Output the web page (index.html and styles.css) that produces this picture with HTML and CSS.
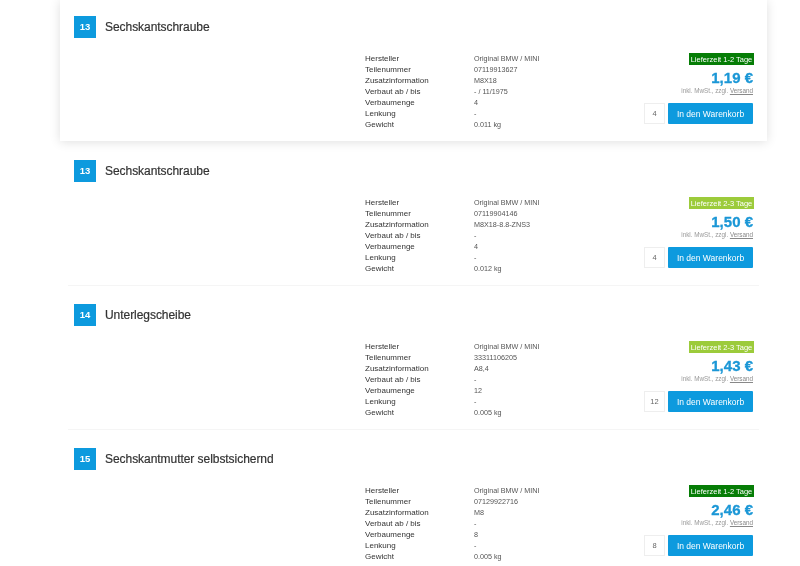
FILE: index.html
```html
<!DOCTYPE html>
<html lang="de">
<head>
<meta charset="utf-8">
<title>Teileliste</title>
<link rel="stylesheet" href="styles.css">
</head>
<body>
<main class="list">
  <article class="item item-active">
    <header class="head"><span class="num">13</span><h2 class="name">Sechskantschraube</h2></header>
    <div class="body">
      <dl class="specs">
        <dt>Hersteller</dt><dd>Original BMW / MINI</dd>
        <dt>Teilenummer</dt><dd>07119913627</dd>
        <dt>Zusatzinformation</dt><dd>M8X18</dd>
        <dt>Verbaut ab / bis</dt><dd>- / 11/1975</dd>
        <dt>Verbaumenge</dt><dd>4</dd>
        <dt>Lenkung</dt><dd>-</dd>
        <dt>Gewicht</dt><dd>0.011 kg</dd>
      </dl>
      <div class="buy">
        <span class="pill pill-fast">Lieferzeit 1-2 Tage</span>
        <div class="price">1,19 €</div>
        <div class="tax">inkl. MwSt., zzgl. <a href="#">Versand</a></div>
        <div class="cart"><span class="qty">4</span><button class="btn">In den Warenkorb</button></div>
      </div>
    </div>
  </article>
  <article class="item">
    <header class="head"><span class="num">13</span><h2 class="name">Sechskantschraube</h2></header>
    <div class="body">
      <dl class="specs">
        <dt>Hersteller</dt><dd>Original BMW / MINI</dd>
        <dt>Teilenummer</dt><dd>07119904146</dd>
        <dt>Zusatzinformation</dt><dd>M8X18-8.8-ZNS3</dd>
        <dt>Verbaut ab / bis</dt><dd>-</dd>
        <dt>Verbaumenge</dt><dd>4</dd>
        <dt>Lenkung</dt><dd>-</dd>
        <dt>Gewicht</dt><dd>0.012 kg</dd>
      </dl>
      <div class="buy">
        <span class="pill pill-slow">Lieferzeit 2-3 Tage</span>
        <div class="price">1,50 €</div>
        <div class="tax">inkl. MwSt., zzgl. <a href="#">Versand</a></div>
        <div class="cart"><span class="qty">4</span><button class="btn">In den Warenkorb</button></div>
      </div>
    </div>
  </article>
  <article class="item">
    <header class="head"><span class="num">14</span><h2 class="name">Unterlegscheibe</h2></header>
    <div class="body">
      <dl class="specs">
        <dt>Hersteller</dt><dd>Original BMW / MINI</dd>
        <dt>Teilenummer</dt><dd>33311106205</dd>
        <dt>Zusatzinformation</dt><dd>A8,4</dd>
        <dt>Verbaut ab / bis</dt><dd>-</dd>
        <dt>Verbaumenge</dt><dd>12</dd>
        <dt>Lenkung</dt><dd>-</dd>
        <dt>Gewicht</dt><dd>0.005 kg</dd>
      </dl>
      <div class="buy">
        <span class="pill pill-slow">Lieferzeit 2-3 Tage</span>
        <div class="price">1,43 €</div>
        <div class="tax">inkl. MwSt., zzgl. <a href="#">Versand</a></div>
        <div class="cart"><span class="qty">12</span><button class="btn">In den Warenkorb</button></div>
      </div>
    </div>
  </article>
  <article class="item item-last">
    <header class="head"><span class="num">15</span><h2 class="name">Sechskantmutter selbstsichernd</h2></header>
    <div class="body">
      <dl class="specs">
        <dt>Hersteller</dt><dd>Original BMW / MINI</dd>
        <dt>Teilenummer</dt><dd>07129922716</dd>
        <dt>Zusatzinformation</dt><dd>M8</dd>
        <dt>Verbaut ab / bis</dt><dd>-</dd>
        <dt>Verbaumenge</dt><dd>8</dd>
        <dt>Lenkung</dt><dd>-</dd>
        <dt>Gewicht</dt><dd>0.005 kg</dd>
      </dl>
      <div class="buy">
        <span class="pill pill-fast">Lieferzeit 1-2 Tage</span>
        <div class="price">2,46 €</div>
        <div class="tax">inkl. MwSt., zzgl. <a href="#">Versand</a></div>
        <div class="cart"><span class="qty">8</span><button class="btn">In den Warenkorb</button></div>
      </div>
    </div>
  </article>
</main>
</body>
</html>
```
FILE: styles.css
```css
* { box-sizing: border-box; }
html, body { margin: 0; padding: 0; background: #fff; }
body {
  height: 566px;
  overflow: hidden;
  font-family: "Liberation Sans", Arial, sans-serif;
  color: #444;
}
.list {
  display: flex;
  flex-direction: column;
  width: 707px;
  margin-left: 60px;
  will-change: opacity;
}
.item {
  height: 144px;
  padding: 16px 14px 0;
  position: relative;
}
.item::after {
  content: "";
  position: absolute;
  left: 8px;
  right: 8px;
  bottom: 2px;
  height: 1px;
  background: #f5f5f5;
}
.item-active {
  height: 141px;
  margin-bottom: 3px;
  box-shadow: 0 1px 10px rgba(0, 0, 0, 0.13);
}
.item-active::after, .item-last::after { display: none; }
.head {
  display: flex;
  align-items: center;
  gap: 9px;
  height: 22px;
}
.num {
  width: 22px;
  height: 22px;
  flex: none;
  display: flex;
  align-items: center;
  justify-content: center;
  padding-bottom: 2px;
  background: #0d9ade;
  color: #fff;
  font-size: 9.5px;
  font-weight: 700;
}
.name {
  margin: 0;
  font-family: "Liberation Sans", Arial, sans-serif;
  font-size: 12px;
  font-weight: 400;
  letter-spacing: -0.05px;
  color: #333;
  -webkit-text-stroke: 0.2px #333;
}
.body {
  display: flex;
  justify-content: space-between;
  margin-top: 14px;
  padding-left: 291px;
}
.specs {
  display: grid;
  grid-template-columns: 109px 1fr;
  grid-auto-rows: 11px;
  margin: 1px 0 0;
  font-size: 8px;
  line-height: 11px;
}
.specs dt { color: #333; }
.specs dd { margin: 0; color: #555; font-size: 7.2px; }
.buy {
  width: 110px;
  display: flex;
  flex-direction: column;
  align-items: flex-end;
  padding-top: 1px;
}
.pill {
  height: 12px;
  width: 65px;
  margin-right: -1px;
  display: flex;
  align-items: center;
  justify-content: center;
  font-size: 7.5px;
  color: #fff;
  white-space: nowrap;
}
.pill-fast { background: #067d06; }
.pill-slow { background: #9ccb3b; }
.price {
  margin-top: 4px;
  height: 18px;
  line-height: 18px;
  font-size: 15px;
  font-weight: 700;
  color: #1b97d6;
  -webkit-text-stroke: 0.3px #1b97d6;
}
.tax {
  height: 8px;
  line-height: 8px;
  font-size: 6.3px;
  color: #999;
}
.tax a { color: #888; }
.cart {
  display: flex;
  gap: 3px;
  margin-top: 8px;
}
.qty {
  width: 21px;
  height: 21px;
  display: flex;
  align-items: center;
  justify-content: center;
  border: 1px solid #eee;
  font-size: 7.5px;
  color: #666;
}
.btn {
  width: 85px;
  height: 21px;
  padding: 0;
  border: 0;
  border-radius: 1px;
  background: #0d9ade;
  color: #fff;
  font-family: "Liberation Sans", Arial, sans-serif;
  font-size: 8.5px;
}
```
